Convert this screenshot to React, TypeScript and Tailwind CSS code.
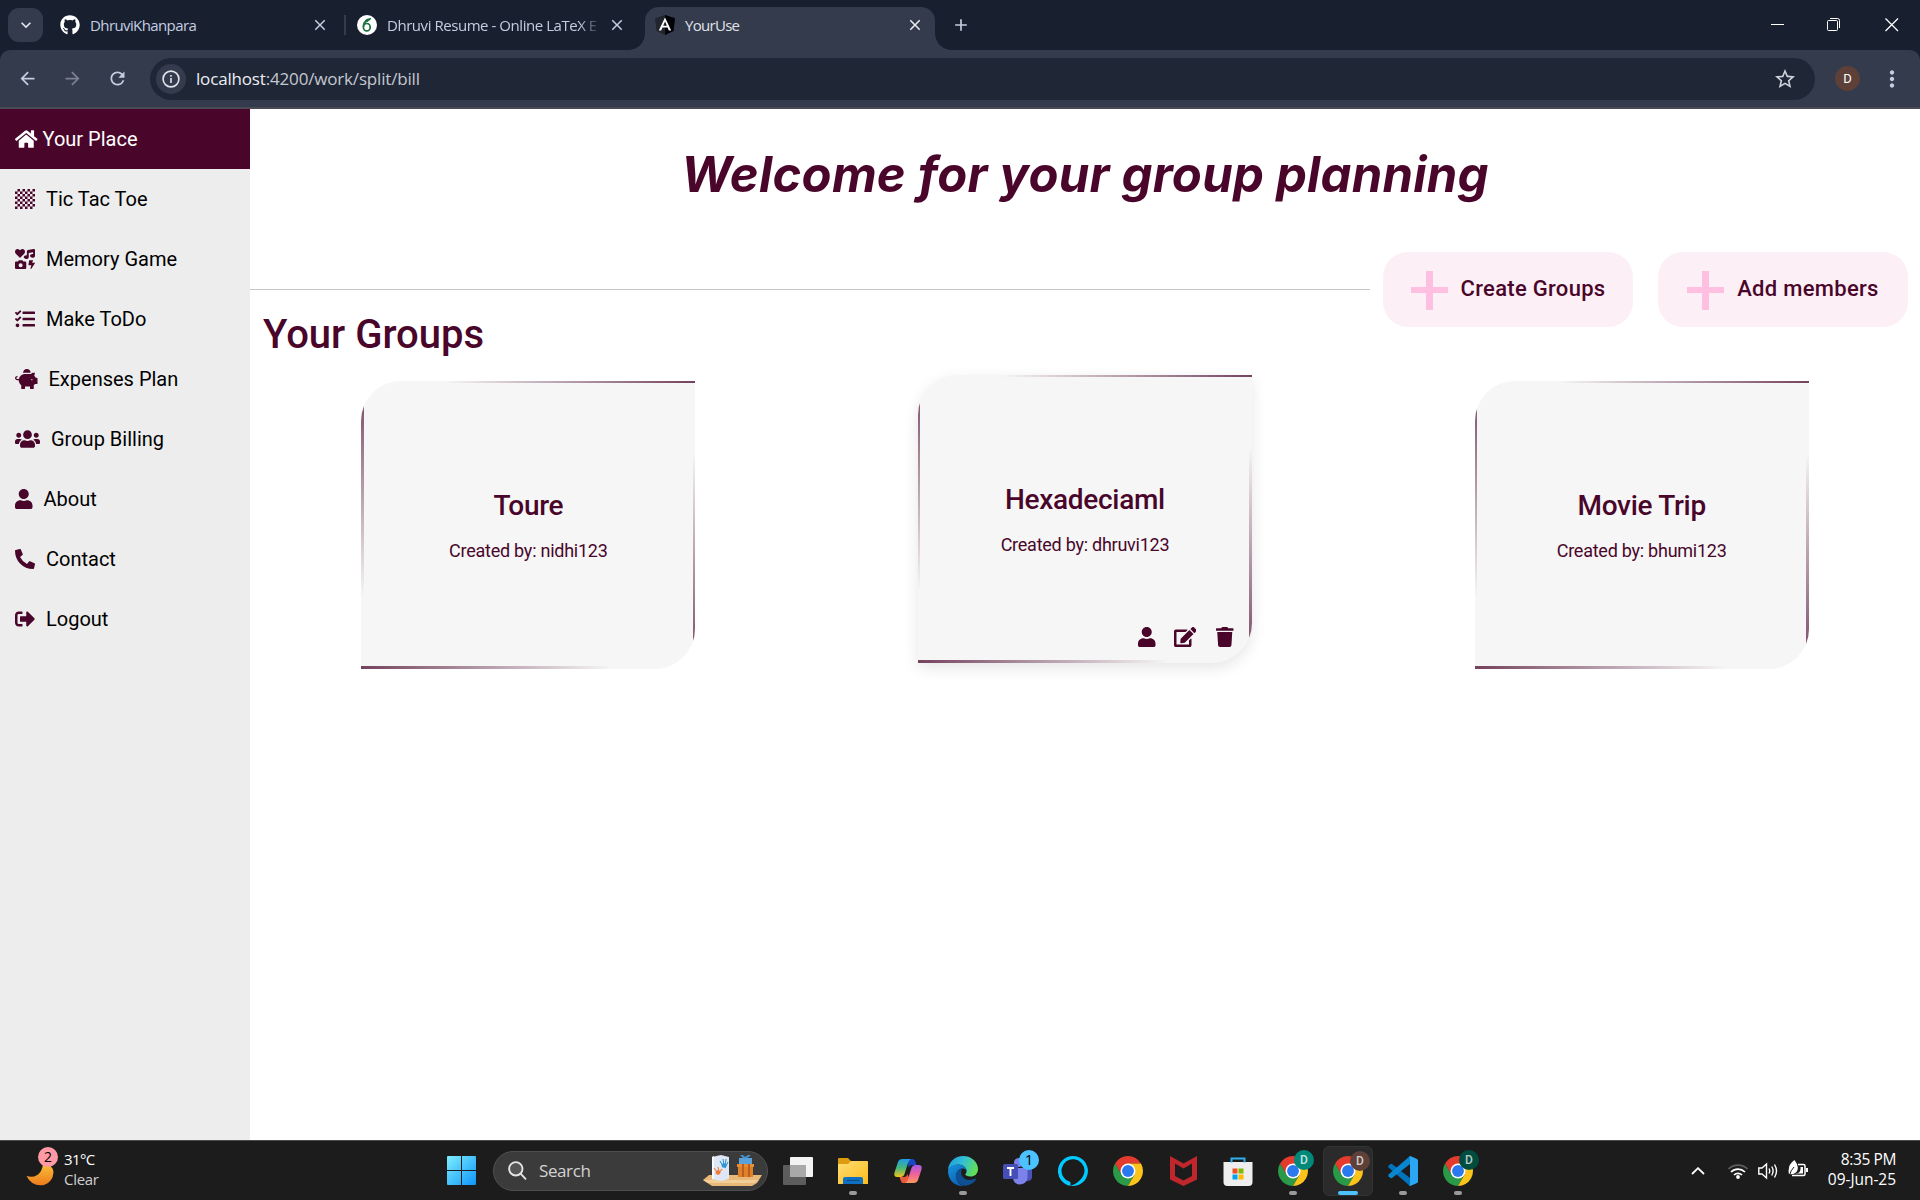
import React from "react";
import {
  FaHome,
  FaChessBoard,
  FaIcons,
  FaTasks,
  FaPiggyBank,
  FaUsers,
  FaUser,
  FaPhoneAlt,
  FaSignOutAlt,
  FaEdit,
  FaTrash,
  FaGithub,
} from "react-icons/fa";
import { MdClose, MdAdd, MdArrowBack, MdArrowForward, MdRefresh, MdStarBorder, MdMoreVert, MdKeyboardArrowDown } from "react-icons/md";

function AngularLogo() {
  return (
    <svg viewBox="0 0 20 20" className="h-5 w-5 shrink-0">
      <path d="M10 0 20 3.3 18.5 16 10 20 1.5 16 0 3.3Z" fill="#23252e" />
      <path d="M10 0 20 3.3 18.5 16 10 20Z" fill="#020307" />
      <path d="M10 2.4 3.8 15.6H6.2L7.4 12.6H12.6L13.8 15.6H16.2ZM10 6.5 11.8 10.7H8.2Z" fill="#fff" />
    </svg>
  );
}

function OverleafLogo() {
  return (
    <svg viewBox="0 0 20 20" className="h-5 w-5 shrink-0">
      <circle cx="10" cy="10" r="10" fill="#fff" />
      <ellipse cx="9.8" cy="12.2" rx="3.4" ry="3.7" fill="none" stroke="#18713d" strokeWidth="1.7" />
      <path d="M6.4 12C6.200 8.500 8 6.200 11 5.600" fill="none" stroke="#18713d" strokeWidth="1.600" />
      <path d="M7.800 6.200C9 3 12 4 14.200 2.800 13.500 6 11 6.300 8.800 7.200Z" fill="#18713d" />
    </svg>
  );
}

function TabStrip() {
  return (
    <div className="flex h-[50px] items-center bg-[#182030] text-[#c5cce0]">
      <div className="ml-2 flex h-[34px] w-[35px] items-center justify-center rounded-[11px] bg-[#343b4c]">
        <MdKeyboardArrowDown className="h-5 w-5 text-[#e3e6ee]" />
      </div>
      <div className="ml-[17px] flex w-[285px] items-center">
        <FaGithub className="h-5 w-5 text-white" />
        <span className="ml-[10px] grow text-[15px] tracking-[-0.6px]">DhruviKhanpara</span>
        <MdClose className="mr-[16px] h-[18px] w-[18px]" />
      </div>
      <div className="-ml-px h-5 w-[2px] bg-[#343b4c]" />
      <div className="ml-[11px] flex w-[288px] items-center">
        <OverleafLogo />
        <span className="ml-[10px] w-[212px] text-[15px] tracking-[-0.45px] whitespace-nowrap [mask-image:linear-gradient(to_right,black_192px,transparent_214px)]">
          Dhruvi Resume - Online LaTeX E
        </span>
        <MdClose className="ml-[9px] h-[18px] w-[18px]" />
      </div>
      <div className="relative flex h-[43px] w-[290px] items-center self-end rounded-t-[14px] bg-[#343b4c] pb-[7px] before:absolute before:bottom-0 before:-left-4 before:h-4 before:w-4 before:bg-[radial-gradient(circle_at_0_0,transparent_15.5px,#343b4c_16px)] after:absolute after:-right-4 after:bottom-0 after:h-4 after:w-4 after:bg-[radial-gradient(circle_at_100%_0,transparent_15.5px,#343b4c_16px)]">
        <div className="ml-[10px]">
          <AngularLogo />
        </div>
        <span className="ml-[10px] grow text-[15px] tracking-[-0.7px] text-[#e0e3ea]">YourUse</span>
        <MdClose className="mr-[11px] h-[18px] w-[18px] text-[#eceef2]" />
      </div>
      <MdAdd className="ml-4 h-5 w-5" />
      <div className="mr-[21px] ml-auto flex items-center text-white">
        <svg className="h-[14px] w-[14px]" viewBox="0 0 14 14">
          <path d="M0 6.500H13" stroke="currentColor" />
        </svg>
        <svg className="ml-[42px] h-[14px] w-[14px]" viewBox="0 0 14 14" fill="none" stroke="currentColor">
          <rect x="0.5" y="2.5" width="10" height="10" rx="1" />
          <path d="M3 0.500H10.500Q12.500 0.500 12.500 2.500V10" />
        </svg>
        <svg className="ml-[44px] h-[14px] w-[14px]" viewBox="0 0 14 14" stroke="currentColor" strokeWidth="1.3">
          <path d="M0.500 0.500 13 13M13 0.500 0.500 13" />
        </svg>
      </div>
    </div>
  );
}

function Toolbar() {
  return (
    <div className="bg-[#182030]">
      <div className="flex h-[59px] items-center rounded-t-[10px] border-b-2 border-[#4a4a54] bg-[#343b4c] text-[#c5cce0]">
        <MdArrowBack className="ml-[17px] h-[21px] w-[21px]" />
        <MdArrowForward className="ml-6 h-[21px] w-[21px] text-[#7b8190]" />
        <MdRefresh className="ml-6 h-[21px] w-[21px]" />
        <div className="ml-[22px] flex h-[42px] w-[1665px] items-center rounded-full bg-[#1f2737]">
          <div className="ml-[6px] flex h-[30px] w-[30px] items-center justify-center rounded-full bg-[#343b4c]">
            <svg viewBox="0 0 18 18" className="h-[18px] w-[18px] text-[#e3e5ec]" fill="none" stroke="currentColor" strokeWidth="1.6">
              <circle cx="9" cy="9" r="7.900" />
              <path d="M9 8V13M9 5V6.700" />
            </svg>
          </div>
          <span className="mt-px ml-[10px] grow text-[17px] tracking-[-0.17px] text-[#c5c8cf]">
            <span className="text-[#eceef3]">localhost</span>:4200/work/split/bill
          </span>
          <MdStarBorder className="mr-[18px] h-6 w-6 text-[#cfd2db]" />
        </div>
        <div className="ml-5 flex h-[25px] w-[25px] items-center justify-center rounded-full bg-[#5d4037] font-['Roboto'] text-[13px] text-white">D</div>
        <MdMoreVert className="ml-[19px] h-[26px] w-[26px]" />
      </div>
    </div>
  );
}

const menu = [
  { label: "Tic Tac Toe", icon: <FaChessBoard className="h-5 w-5" /> },
  { label: "Memory Game", icon: <FaIcons className="h-5 w-5" /> },
  { label: "Make ToDo", icon: <FaTasks className="h-5 w-5" /> },
  { label: "Expenses Plan", icon: <FaPiggyBank className="h-5 w-[22.5px]" /> },
  { label: "Group Billing", icon: <FaUsers className="h-5 w-[25px]" /> },
  { label: "About", icon: <FaUser className="h-5 w-[17.5px]" /> },
  { label: "Contact", icon: <FaPhoneAlt className="h-5 w-5" /> },
  { label: "Logout", icon: <FaSignOutAlt className="h-5 w-5" /> },
];

function Sidebar() {
  return (
    <nav className="w-[250px] shrink-0 bg-[#ededed] font-['Roboto'] text-[20px] text-black">
      <div className="flex h-[60px] items-center bg-[#49062a] pl-[15px] text-white">
        <FaHome className="h-5 w-[22.5px]" />
        <span className="ml-[5px]">Your Place</span>
      </div>
      {menu.map((m) => (
        <div key={m.label} className="flex h-[60px] items-center pl-[15px]">
          <span className="text-[#49062a]">{m.icon}</span>
          <span className="ml-[11px]">{m.label}</span>
        </div>
      ))}
    </nav>
  );
}

function ActionButton({ label }: { label: string }) {
  return (
    <button className="flex h-[75px] w-[250px] items-center justify-center rounded-[25px] bg-[#fceff6] text-[22px] font-medium tracking-[0.3px] text-[#49062a]">
      <svg viewBox="0 0 37 39" className="mt-[2px] h-[39px] w-[37px]">
        <path d="M15 0H22V39H15ZM0 16H37V22H0Z" fill="#ffbfe1" />
      </svg>
      <span className="-mt-[3px] ml-[13px]">{label}</span>
    </button>
  );
}

function GroupCard({ name, owner, active }: { name: string; owner: string; active?: boolean }) {
  return (
    <div className="flex justify-center">
      <div
        className={
          "relative flex h-[288px] w-[334px] flex-col items-center overflow-hidden rounded-tl-[40px] rounded-br-[40px] bg-[#f6f6f6] text-[#49062a] " +
          (active ? "-mt-[6px] shadow-[0_5px_15px_rgba(0,0,0,0.1)]" : "")
        }
      >
        <div className="absolute inset-x-0 top-0 h-[2px] bg-linear-to-l from-[#49062a]/75 to-transparent to-75%" />
        <div className="absolute inset-y-0 left-0 w-[2.5px] bg-linear-to-b from-[#49062a]/75 to-transparent to-75%" />
        <div className="absolute inset-x-0 bottom-0 h-[3px] bg-linear-to-r from-[#49062a]/75 to-transparent to-75%" />
        <div className="absolute inset-y-0 right-0 w-[2.5px] bg-linear-to-t from-[#49062a]/75 to-transparent to-75%" />
        <h3 className="mt-[108px] text-[28px] leading-[34px] font-medium tracking-[-0.3px]">{name}</h3>
        <p className="mt-[15px] text-[18px] leading-[26px] tracking-[-0.25px]">Created by: {owner}</p>
        {active && (
          <div className="mt-auto mr-[18px] mb-[16px] flex items-center self-end">
            <FaUser className="h-5 w-[17.5px]" />
            <FaEdit className="ml-[18px] h-5 w-[22.5px]" />
            <FaTrash className="ml-[20px] h-5 w-[17.5px]" />
          </div>
        )}
      </div>
    </div>
  );
}

function Main() {
  return (
    <main className="flex min-w-0 grow flex-col bg-white font-['Roboto']">
      <h1 className="mt-[36px] text-center font-['Inter'] text-[49px] leading-[60px] font-[650] tracking-[0.25px] whitespace-nowrap text-[#49062a] italic">
        Welcome for your group planning
      </h1>
      <div className="mt-[47px] flex h-[75px] items-center pr-3">
        <div className="mr-[13px] h-px grow bg-[#c6c6c6]" />
        <ActionButton label="Create Groups" />
        <div className="w-[25px]" />
        <ActionButton label="Add members" />
      </div>
      <h2 className="-mt-[16px] ml-[13px] h-[48px] text-[40px] leading-[48px] font-medium text-[#49062a]">Your Groups</h2>
      <div className="mt-[22px] grid grid-cols-3">
        <GroupCard name="Toure" owner="nidhi123" />
        <GroupCard name="Hexadeciaml" owner="dhruvi123" active />
        <GroupCard name="Movie Trip" owner="bhumi123" />
      </div>
    </main>
  );
}

function Chrome() {
  return (
    <svg viewBox="2 2 44 44" className="h-[30px] w-[30px]">
      <path d="M4.950 13A22 22 0 0 1 43.050 13H24L14.470 29.500Z" fill="#e33b2e" />
      <path d="M4.950 13A22 22 0 0 0 24 46L33.530 29.500H14.470Z" fill="#2a9a48" />
      <path d="M43.050 13A22 22 0 0 1 24 46L33.530 29.500 24 13Z" fill="#fcc31a" />
      <circle cx="24" cy="24" r="11" fill="#fff" />
      <circle cx="24" cy="24" r="8.700" fill="#2b79ee" />
    </svg>
  );
}

function Explorer() {
  return (
    <svg viewBox="0 0 30 28" className="h-[28px] w-[30px]">
      <defs>
        <linearGradient id="fold" x1="0" y1="0" x2="1" y2="1">
          <stop offset="0" stopColor="#ffdf74" />
          <stop offset="1" stopColor="#fcba1c" />
        </linearGradient>
      </defs>
      <path d="M0 2Q0 1 1 1H10L13 4H29V12H0Z" fill="#dd9c0d" />
      <path d="M0 7H10L13 4H29Q30 4 30 5V27H0Z" fill="url(#fold)" />
      <path d="M5 27V22Q5 20 7 20H23Q25 20 25 22V27Z" fill="#0f6fc0" />
      <path d="M9 23.500H21" stroke="#0a4a86" strokeWidth="1.200" strokeLinecap="round" />
    </svg>
  );
}

function Copilot() {
  return (
    <svg viewBox="0 0 28 26" className="h-[26px] w-[28px]">
      <defs>
        <linearGradient id="cpa" x1="0" y1="0" x2="0" y2="1">
          <stop offset="0" stopColor="#1f9bea" />
          <stop offset="0.5" stopColor="#45b87a" />
          <stop offset="1" stopColor="#f3c21c" />
        </linearGradient>
        <linearGradient id="cpb" x1="0" y1="0" x2="0" y2="1">
          <stop offset="0" stopColor="#a45be8" />
          <stop offset="0.5" stopColor="#f0609a" />
          <stop offset="1" stopColor="#fb9a5c" />
        </linearGradient>
      </defs>
      <path d="M14 1H18.500Q20.500 1 21.200 3L22.500 7H18Q15.500 7 14.500 10Z" fill="#1b45c8" />
      <path d="M8.500 1H17Q15 2 14 5L10.500 16Q9.500 19 6.500 19H3Q-0.500 19 0.500 14.500L4 4Q5 1 8.500 1Z" fill="url(#cpa)" />
      <path d="M5.500 19H10Q12.500 19 13.500 16L15 20 12 25H9Q7.500 25 6.800 22.800Z" fill="#e95a3a" />
      <path d="M19.500 25H11Q13 24 14 21L17.500 10Q18.500 7 21.500 7H25Q28.500 7 27.500 11.500L24 22Q23 25 19.500 25Z" fill="url(#cpb)" />
    </svg>
  );
}

function Edge() {
  return (
    <svg viewBox="0 0 30 30" className="h-[30px] w-[30px]">
      <defs>
        <linearGradient id="eda" x1="0" y1="0.2" x2="1" y2="0.5">
          <stop offset="0" stopColor="#1f9bde" />
          <stop offset="0.5" stopColor="#35c1d4" />
          <stop offset="1" stopColor="#62e052" />
        </linearGradient>
        <linearGradient id="edb" x1="0" y1="0" x2="0.6" y2="1">
          <stop offset="0" stopColor="#1794dc" />
          <stop offset="1" stopColor="#0a5fb4" />
        </linearGradient>
      </defs>
      <path d="M0 14C0.500 6 7 0 15 0C24 0 30 6.500 30 13C30 18 26.500 20.500 22.500 20.500C19.500 20.500 17.300 19.500 17.300 18.600C17.300 18 18.600 17.300 18.600 15C18.600 11.500 15 8.500 10.500 8.500C5 8.500 1 12 0 14Z" fill="url(#eda)" />
      <path d="M0 15C0.500 11.500 4.500 8.500 9.500 8.500C14 8.500 18.600 11 18.600 15C18 13 16 12.300 14 12.500C10 13 8 17 8 20C8 25 12 30 17 30C8 31 0 25 0 15Z" fill="url(#edb)" />
      <path d="M14 12.500C9 14 7.500 18 8 21.500C9 27 14 30 18 29.700C22.500 29 26 26.500 28 23.500C28.300 22.700 27.700 22.400 27 22.800C18 26.500 10.500 20.500 14 12.500Z" fill="#0f4f94" />
    </svg>
  );
}

function Teams() {
  return (
    <svg viewBox="0 0 30 30" className="h-[30px] w-[30px]">
      <circle cx="25" cy="9" r="3.500" fill="#5059c9" />
      <path d="M20 12H29V21Q29 25 24 25H20Z" fill="#4a52bb" />
      <circle cx="15.500" cy="6.500" r="4.500" fill="#7b83eb" />
      <path d="M10 12H24.500V21Q24.500 28 17 28.500 10 28 10 21Z" fill="#7b83eb" />
      <rect x="0" y="8" width="15" height="15" rx="1.500" fill="#464eb8" />
      <path d="M4 12H11M7.500 12V20" stroke="#fff" strokeWidth="1.900" fill="none" />
    </svg>
  );
}

function Alexa() {
  return (
    <svg viewBox="0 0 30 30" className="h-[30px] w-[30px]">
      <path d="M15 0A15 15 0 0 0 12.500 29.800V26.900C12.500 26.200 12 25.800 11.500 25.600A11.500 11.500 0 1 1 26.500 15C26.500 22 18 28.500 12.500 29.800A15 15 0 1 0 15 0Z" fill="#00caff" />
    </svg>
  );
}

function McAfee() {
  return (
    <svg viewBox="0 0 27 30" className="h-[30px] w-[27px]">
      <path d="M0 0 13.500 7.500 27 0V23.500L13.500 30 0 23.500ZM5 7.500V20L13.500 24.500 22 20V7.500L13.500 12.500Z" fill="#c0272d" />
    </svg>
  );
}

function Store() {
  return (
    <svg viewBox="0 0 30 30" className="h-[30px] w-[30px]">
      <path d="M0.500 6H29.500V26Q29.500 30 25.500 30H4.500Q0.500 30 0.500 26Z" fill="#eeeeee" />
      <path d="M8.500 6.500V2.500H21.500V6.500" fill="none" stroke="#2fb0ee" strokeWidth="2" />
      <path d="M9.500 12.500H14.500V17.500H9.500Z" fill="#f25022" />
      <path d="M15.500 12.500H20.500V17.500H15.500Z" fill="#7fba00" />
      <path d="M9.500 18.500H14.500V23.500H9.500Z" fill="#00a4ef" />
      <path d="M15.500 18.500H20.500V23.500H15.500Z" fill="#ffb900" />
    </svg>
  );
}

function VSCode() {
  return (
    <svg viewBox="0 0 30 30" className="h-[30px] w-[30px]">
      <path d="M0.500 9.800 2.500 8Q3.200 7.500 4 8L28.500 27 22 30 0.500 11.500Q0 10.500 0.500 9.800Z" fill="#0073bd" />
      <path d="M0.500 20.200 2.500 22Q3.200 22.500 4 22L28.500 3 22 0 0.500 18.500Q0 19.500 0.500 20.200Z" fill="#0a86d1" />
      <path d="M22 0 29 3Q30 3.500 30 4.500V25.500Q30 26.500 29 27L22 30Q21 29.500 22 28V2Q21 0.500 22 0Z" fill="#2aa6f2" />
    </svg>
  );
}

function TaskView() {
  return (
    <svg viewBox="0 0 30 28" className="h-[28px] w-[30px]">
      <rect x="7" y="0" width="23" height="20" rx="1" fill="#f3f3f3" />
      <rect x="0" y="8" width="23" height="20" rx="1" fill="#5d5d5d" />
      <rect x="7" y="8" width="16" height="12" fill="#a9a9a9" />
    </svg>
  );
}

function Task({ children, state, badge, badgeClass }: { children: React.ReactNode; state?: "open" | "active"; badge?: string; badgeClass?: string }) {
  return (
    <div className={"relative mr-[5px] flex h-[50px] w-[50px] items-center justify-center rounded-md " + (state === "active" ? "border border-[#333333] bg-[#2b2b2b]" : "")}>
      {children}
      {badge && <span className={"absolute top-[4px] left-[26px] flex h-5 w-5 items-center justify-center rounded-full " + badgeClass}>{badge}</span>}
      {state === "open" && <span className="absolute bottom-[1px] left-[21px] h-1 w-2 rounded-full bg-[#9a9a9a]" />}
      {state === "active" && <span className="absolute bottom-0 left-[14px] h-1 w-5 rounded-full bg-[#4cc2ff]" />}
    </div>
  );
}

function SearchArt() {
  return (
    <svg viewBox="0 0 59 32" className="h-8 w-[59px]">
      <path d="M0 25 6 20H59L54 28 49 31H9Z" fill="#e7b878" />
      <path d="M0 25H56L51 28H5Z" fill="#f3cf98" />
      <path d="M9 2 18 0 26 2V24L18 26 9 24Z" fill="#dfe6f6" />
      <path d="M9 2 11 1V24.500L9 24Z" fill="#f8faff" />
      <path d="M17 6 20 11M20 4 21 10M23 4 22 11M25 7 22 13" stroke="#2f96cf" strokeWidth="1.100" />
      <ellipse cx="21" cy="10.500" rx="2.400" ry="2.200" fill="#2f96cf" />
      <path d="M11 13 14 17M15 12 16 17M19 14 16 18" stroke="#ef7b35" strokeWidth="1.100" />
      <ellipse cx="15" cy="17.500" rx="2.400" ry="2.200" fill="#ef7b35" />
      <rect x="36" y="3" width="13" height="7" fill="#5aa3da" />
      <path d="M38 0 42 3 47 0" stroke="#4a93cf" strokeWidth="2" fill="none" />
      <rect x="35" y="9" width="15" height="13" fill="#e0802b" />
      <path d="M34 9H51V12H34Z" fill="#ea8c35" />
      <path d="M39 9H41V22H39ZM45 9H47V22H45Z" fill="#b9601a" />
    </svg>
  );
}

function Taskbar() {
  return (
    <footer className="flex h-[60px] shrink-0 items-center border-t border-[#4a4a4a] bg-[#1c1c1c] text-[15px] text-white">
      <div className="-mt-1 flex w-[447px] items-center pl-[26px]">
        <div className="relative h-[36px] w-[34px]">
          <svg viewBox="0 0 28 24" className="absolute top-[11px] left-0 h-[24px] w-[28px]">
            <defs>
              <linearGradient id="moon" x1="0" y1="0" x2="0" y2="1">
                <stop offset="0" stopColor="#f9c33a" />
                <stop offset="1" stopColor="#ee7b1c" />
              </linearGradient>
            </defs>
            <path d="M0.500 14Q10 17 15 9 17 5 17 1 27 3 27.500 10 27 20 18 23 6 25 0.500 14Z" fill="url(#moon)" />
          </svg>
          <span className="absolute -top-1 left-[12px] flex h-5 w-5 items-center justify-center rounded-full bg-[#ff99a4] text-[14px] text-black">2</span>
        </div>
        <div className="ml-1 text-[15px] leading-5 tracking-[-0.6px]">
          <div>31°C</div>
          <div className="tracking-[-0.3px] text-[#cfcfcf]">Clear</div>
        </div>
      </div>
      <svg viewBox="0 0 29 29" className="h-[29px] w-[29px]">
        <defs>
          <linearGradient id="win" gradientUnits="userSpaceOnUse" x1="0" y1="0" x2="29" y2="29">
            <stop offset="0" stopColor="#7eeefe" />
            <stop offset="1" stopColor="#0e95f9" />
          </linearGradient>
        </defs>
        <path d="M0 1Q0 0 1 0H14V14H0ZM15 0H28Q29 0 29 1V14H15ZM0 15H14V29H1Q0 29 0 28ZM15 15H29V28Q29 29 28 29H15Z" fill="url(#win)" />
      </svg>
      <div className="ml-[17px] flex h-10 w-[275px] items-center rounded-full border border-[#505050] bg-[#3b3b3b] pr-[5px] pl-[14px]">
        <svg viewBox="0 0 19 19" className="h-[19px] w-[19px]" fill="none" stroke="#e4e4e4" strokeWidth="1.900" strokeLinecap="round">
          <circle cx="7.800" cy="7.800" r="6.700" fill="#555555" />
          <path d="M12.800 12.800 17.500 17.800" />
        </svg>
        <span className="ml-3 grow text-[17px] tracking-[-0.4px] text-[#d3d3d3]">Search</span>
        <SearchArt />
      </div>
      <div className="ml-[5px] flex items-center">
        <Task><TaskView /></Task>
        <Task state="open"><Explorer /></Task>
        <Task><Copilot /></Task>
        <Task state="open"><Edge /></Task>
        <Task badge="1" badgeClass="bg-[#4cc2ff] text-black text-[15px]"><Teams /></Task>
        <Task><Alexa /></Task>
        <Task><Chrome /></Task>
        <Task><McAfee /></Task>
        <Task><Store /></Task>
        <Task state="open" badge="D" badgeClass="bg-[#00897b] text-[#c4e3df] text-[12px] font-['Roboto'] font-medium"><Chrome /></Task>
        <Task state="active" badge="D" badgeClass="bg-[#5d4037] text-[#d6cdc9] text-[12px] font-['Roboto'] font-medium"><Chrome /></Task>
        <Task state="open"><VSCode /></Task>
        <Task state="open" badge="D" badgeClass="bg-[#004d40] text-[#b5cbc6] text-[12px] font-['Roboto'] font-medium"><Chrome /></Task>
      </div>
      <div className="mr-6 ml-auto flex items-center">
        <svg viewBox="0 0 14 8" className="h-2 w-[14px]" fill="none" stroke="#fff" strokeWidth="1.800">
          <path d="M1 7 7 1.200 13 7" />
        </svg>
        <svg viewBox="0 0 20 16" className="ml-[23px] h-4 w-5" fill="none" strokeWidth="1.700">
          <path d="M0.500 6A13.500 13.500 0 0 1 19.500 6" stroke="#5c5c5c" />
          <path d="M3 9A10 10 0 0 1 17 9M6 12A5.800 5.800 0 0 1 14 12" stroke="#fff" />
          <circle cx="10" cy="14" r="1.900" fill="#fff" />
        </svg>
        <svg viewBox="0 0 20 18" className="ml-[10px] h-[18px] w-5" fill="none" stroke="#fff" strokeWidth="1.400">
          <path d="M0.800 6H4L8.500 2V16L4 12H0.800Z" />
          <path d="M11 6.500Q12.500 9 11 11.500M13.700 4.500Q16.500 9 13.700 13.500M16.500 2.500Q20.500 9 16.500 15.500" />
        </svg>
        <svg viewBox="0 0 20 18" className="-mt-1 ml-[10px] h-[18px] w-5">
          <path d="M10 4.500H15.500Q17 4.500 17 6V14Q17 15.500 15.500 15.500H4" fill="none" stroke="#fff" strokeWidth="1.500" />
          <path d="M18 8H20V12H18ZM10 13Q13 12 12.500 7H15V13.500H7Z" fill="#fff" />
          <path d="M1 14.500Q-1 5 6.500 0 12 7 8.500 12 5 15 2 14Z" fill="#fff" />
          <path d="M1 16Q3 10 6 7" stroke="#1c1c1c" fill="none" />
        </svg>
        <div className="-mt-1 ml-[18px] w-[70px] text-right text-[15.500px] leading-5 tracking-[-0.05px] whitespace-nowrap">
          <div className="tracking-[-0.4px]">8:35 PM</div>
          <div>09-Jun-25</div>
        </div>
      </div>
    </footer>
  );
}

export default function App() {
  return (
    <div className="flex h-[1200px] w-[1920px] flex-col overflow-hidden bg-white font-['Open_Sans',sans-serif]">
      <TabStrip />
      <Toolbar />
      <div className="flex min-h-0 grow">
        <Sidebar />
        <Main />
      </div>
      <Taskbar />
    </div>
  );
}
